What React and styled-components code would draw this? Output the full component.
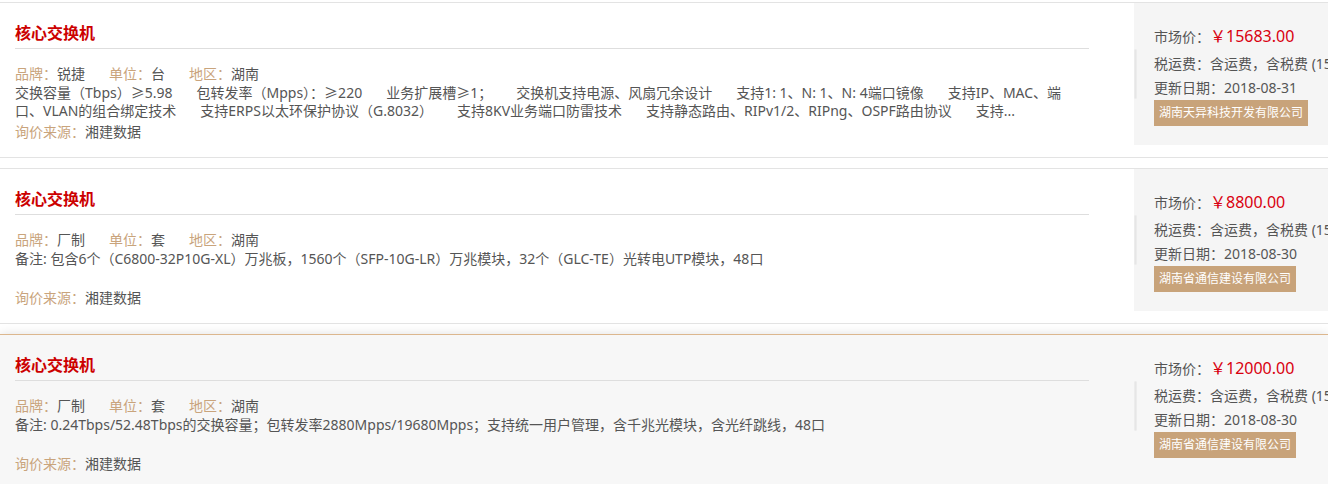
import React from "react";
import styled, { createGlobalStyle, css } from "styled-components";

const GlobalStyle = createGlobalStyle`
  body {
    margin: 0;
    background: #fff;
    overflow: hidden;
    font-family: "Noto Sans", "Noto Sans CJK SC", sans-serif;
    font-size: 14px;
    color: #555;
  }
`;

const List = styled.div`
  padding-top: 2px;
`;

const Card = styled.div`
  display: flex;
  align-items: flex-start;
  margin-bottom: 10px;
  border-top: 1px solid #e3e3e3;
  border-bottom: 1px solid #e3e3e3;
  background: #fff;
  ${(p) =>
    p.$active &&
    css`
      background: #f7f7f7;
      border-top-color: #dcb78e;
      box-shadow: 0 0 10px rgba(0, 0, 0, 0.12);
    `}
`;

const Main = styled.div`
  flex: none;
  width: 1074px;
  padding: 15px 0 15px 15px;
`;

const Title = styled.h3`
  margin: 0;
  font-size: 16px;
  font-weight: bold;
  line-height: 30px;
  color: #cc0000;
  border-bottom: 1px solid #dedede;
`;

const Attrs = styled.div`
  margin-top: 15px;
  line-height: 20px;
  white-space: nowrap;
`;

const Attr = styled.span`
  margin-right: 24px;
`;

const Label = styled.span`
  color: #c9a47c;
`;

const Desc = styled.div`
  height: 36px;
  line-height: 18px;
  overflow: hidden;
  display: -webkit-box;
  -webkit-line-clamp: 2;
  -webkit-box-orient: vertical;
`;

const Item = styled.span`
  margin-right: 24px;
`;

const Source = styled.div`
  margin-top: 2px;
  line-height: 20px;
`;

const Side = styled.div`
  flex: none;
  display: flex;
  align-items: flex-start;
  width: 260px;
  height: 142px;
  margin-left: 45px;
  background: ${(p) => (p.$active ? "#f7f7f7" : "#f5f5f5")};
  white-space: nowrap;
`;

const Divider = styled.div`
  flex: none;
  align-self: center;
  width: 3px;
  height: 50px;
  border-radius: 2px;
  background: #e6e6e6;
  border: 1px solid #ececec;
  box-sizing: border-box;
`;

const Info = styled.div`
  padding: 18px 0 0 17px;
`;

const PriceRow = styled.div`
  line-height: 30px;
`;

const Price = styled.span`
  font-size: 16px;
  color: #d9000f;
`;

const InfoRow = styled.div`
  line-height: 24px;
`;

const Company = styled.div`
  display: inline-block;
  padding: 0 5px;
  height: 26px;
  line-height: 26px;
  font-size: 12px;
  color: #fff;
  background: #c8a37a;
`;

const products = [
  {
    brand: "锐捷",
    unit: "台",
    specs: [
      "交换容量（Tbps）≥5.98",
      "包转发率（Mpps）：≥220",
      "业务扩展槽≥1；",
      "交换机支持电源、风扇冗余设计",
      "支持1: 1、N: 1、N: 4端口镜像",
      "支持IP、MAC、端口、VLAN的组合绑定技术",
      "支持ERPS以太环保护协议（G.8032）",
      "支持8KV业务端口防雷技术",
      "支持静态路由、RIPv1/2、RIPng、OSPF路由协议",
      "支持...",
    ],
    price: "15683.00",
    date: "2018-08-31",
    company: "湖南天异科技开发有限公司",
  },
  {
    brand: "厂制",
    unit: "套",
    note: "备注: 包含6个（C6800-32P10G-XL）万兆板，1560个（SFP-10G-LR）万兆模块，32个（GLC-TE）光转电UTP模块，48口",
    price: "8800.00",
    date: "2018-08-30",
    company: "湖南省通信建设有限公司",
  },
  {
    brand: "厂制",
    unit: "套",
    note: "备注: 0.24Tbps/52.48Tbps的交换容量；包转发率2880Mpps/19680Mpps；支持统一用户管理，含千兆光模块，含光纤跳线，48口",
    price: "12000.00",
    date: "2018-08-30",
    company: "湖南省通信建设有限公司",
    active: true,
  },
];

function ProductCard({ product }) {
  return (
    <Card $active={product.active}>
      <Main>
        <Title>核心交换机</Title>
        <Attrs>
          <Attr>
            <Label>品牌：</Label>
            {product.brand}
          </Attr>
          <Attr>
            <Label>单位：</Label>
            {product.unit}
          </Attr>
          <Attr>
            <Label>地区：</Label>湖南
          </Attr>
        </Attrs>
        <Desc>
          {product.specs
            ? product.specs.map((s, i) => <Item key={i}>{s}</Item>)
            : product.note}
        </Desc>
        <Source>
          <Label>询价来源：</Label>湘建数据
        </Source>
      </Main>
      <Side $active={product.active}>
        <Divider />
        <Info>
          <PriceRow>
            市场价：<Price>￥{product.price}</Price>
          </PriceRow>
          <InfoRow>税运费：含运费，含税费 (15%)</InfoRow>
          <InfoRow>更新日期：{product.date}</InfoRow>
          <Company>{product.company}</Company>
        </Info>
      </Side>
    </Card>
  );
}

export default function App() {
  return (
    <>
      <GlobalStyle />
      <List>
        {products.map((p, i) => (
          <ProductCard key={i} product={p} />
        ))}
      </List>
    </>
  );
}
